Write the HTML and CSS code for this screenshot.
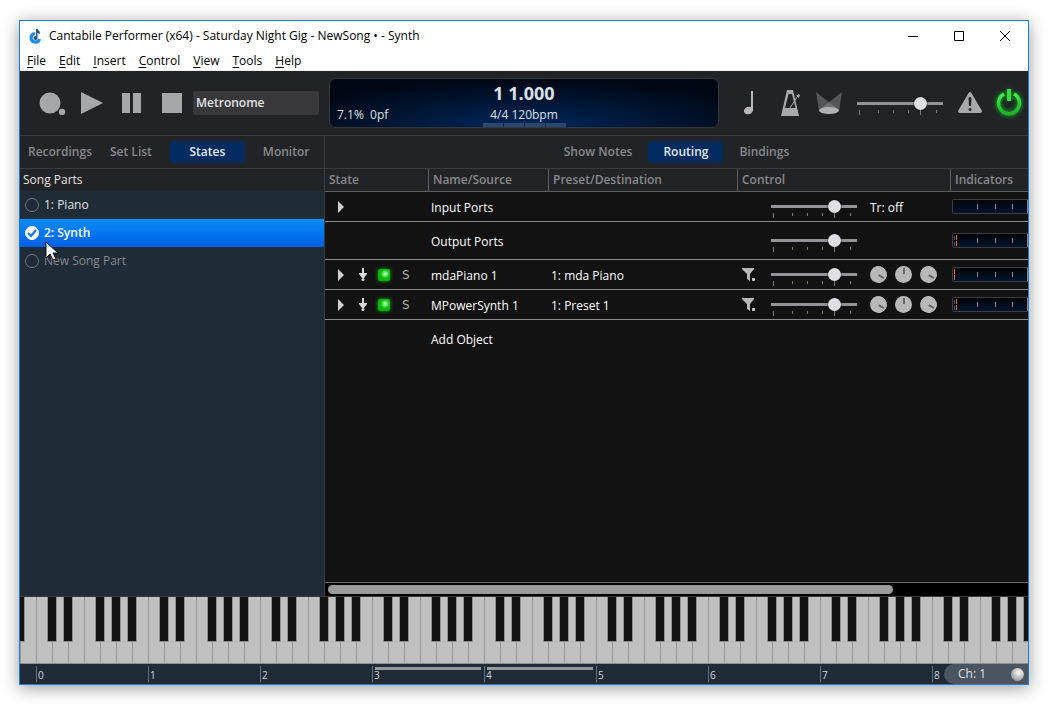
FILE: index.html
```html
<!DOCTYPE html>
<html lang="en">
<head>
    <meta charset="UTF-8">
    <meta name="viewport" content="width=device-width, initial-scale=1.0">
    <title>Cantabile Performer</title>
    <link rel="stylesheet" href="styles.css">
</head>
<body>
    <!-- shared icons -->
    <svg class="defs" aria-hidden="true">
        <defs>
            <linearGradient id="keyGrad" x1="0" y1="0" x2="0" y2="1">
                <stop offset="0" stop-color="#3cf04c"/><stop offset="1" stop-color="#1fae2b"/>
            </linearGradient>
            <radialGradient id="ledGrad" cx="0.6" cy="0.4" r="0.6">
                <stop offset="0" stop-color="#c8ffc8"/><stop offset="0.35" stop-color="#5ce05c"/><stop offset="0.6" stop-color="#0cc00c"/><stop offset="1" stop-color="#06b406"/>
            </radialGradient>
            <linearGradient id="meterGrad" x1="0" y1="0" x2="0" y2="1">
                <stop offset="0" stop-color="#000306"/><stop offset="1" stop-color="#02142f"/>
            </linearGradient>
            <filter id="glow" x="-40%" y="-40%" width="180%" height="180%">
                <feGaussianBlur stdDeviation="2"/>
            </filter>
            <pattern id="octave" x="16" y="0" width="112" height="67" patternUnits="userSpaceOnUse">
                <rect width="112" height="67" fill="#c0c0c0"/>
                <path d="M0 0h1v67h-1zM16 0h1v67h-1zM32 0h1v67h-1zM48 0h1v67h-1zM64 0h1v67h-1zM80 0h1v67h-1zM96 0h1v67h-1z" fill="#979999"/>
                <path d="M11 0h10v45h-10zM27 0h10v45h-10zM59 0h10v45h-10zM75 0h10v45h-10zM91 0h10v45h-10z" fill="#919191"/>
                <path d="M12 0h8v44h-8zM28 0h8v44h-8zM60 0h8v44h-8zM76 0h8v44h-8zM92 0h8v44h-8z" fill="#121212"/>
                <rect y="66" width="112" height="1" fill="#8c8f90"/>
            </pattern>
        </defs>
        <symbol id="expand" viewBox="0 0 7 12"><path d="M1 0L7 6L1 12z" fill="#d0d0d0"/></symbol>
        <symbol id="route" viewBox="0 0 8 14"><path d="M3 0h2v5h3v1L5 10H3L0 6V5h3z" fill="#d8d8d8"/><circle cx="4" cy="11.500" r="1.500" fill="#d8d8d8"/></symbol>
        <symbol id="led" viewBox="0 0 18 18">
            <rect x="3" y="3" width="12" height="12" rx="2" fill="#0a9a0a" filter="url(#glow)"/>
            <rect x="3" y="3" width="12" height="12" rx="2" fill="url(#ledGrad)"/>
        </symbol>
        <symbol id="funnel" viewBox="0 0 14 14"><path d="M0 0h12v1L8 6v7L5 11V6L0 1z" fill="#b8b8b8"/><rect x="10" y="10" width="3" height="3" rx="1" fill="#d0d0d0"/></symbol>
        <symbol id="ticks" viewBox="0 0 86 6"><path d="M2 0h1v5h-1zM21 0h1v3h-1zM36 0h1v3h-1zM51 0h1v3h-1zM63 0h1v5h-1zM79 0h1v3h-1z" fill="#78787c"/></symbol>
        <symbol id="meter" viewBox="0 0 100 16">
            <rect x="0.500" y="0.500" width="99" height="14" rx="1" fill="url(#meterGrad)" stroke="#3c3e44"/>
            <path d="M25 5h1v5h-1zM43 5h1v5h-1zM60 5h1v5h-1zM75 1h1v13h-1z" fill="#8b8f96"/>
        </symbol>
    </svg>

    <div class="window">
        <header class="titlebar">
            <svg class="app-icon" viewBox="0 0 14 16" aria-hidden="true">
                <path d="M6 5.500A4.300 4.300 0 1 0 10.500 11" fill="none" stroke="#1a8bef" stroke-width="3.200"/>
                <path d="M7 1h1.500l2.500 3l-.5 2L8.500 5v5a2 2 0 1 1-1.500-2z" fill="#2a5680"/>
            </svg>
            <h1>Cantabile Performer (x64) - Saturday Night Gig - NewSong • - Synth</h1>
            <div class="caption">
                <button aria-label="Minimize"><svg viewBox="0 0 10 10"><path d="M0 5.500h10"/></svg></button>
                <button aria-label="Maximize"><svg viewBox="0 0 10 10"><path d="M0.500 0.500h9v9h-9z"/></svg></button>
                <button aria-label="Close"><svg viewBox="0 0 10 10"><path d="M0 0l10 10M10 0L0 10"/></svg></button>
            </div>
        </header>
        <nav class="menubar">
            <button><u>F</u>ile</button>
            <button><u>E</u>dit</button>
            <button><u>I</u>nsert</button>
            <button><u>C</u>ontrol</button>
            <button><u>V</u>iew</button>
            <button><u>T</u>ools</button>
            <button><u>H</u>elp</button>
        </nav>

        <div class="toolbar">
            <div class="transport">
                <button aria-label="Record"><svg viewBox="0 0 28 24"><circle cx="12" cy="12" r="10.500"/><circle cx="24" cy="21" r="3.200"/></svg></button>
                <button aria-label="Play"><svg viewBox="0 0 22 24"><path d="M0 1l22 11L0 23z"/></svg></button>
                <button aria-label="Pause"><svg viewBox="0 0 20 24"><path d="M0 2h8v20H0zM11 2h8v20h-8z"/></svg></button>
                <button aria-label="Stop"><svg viewBox="0 0 20 24"><path d="M0 2h20v20H0z"/></svg></button>
            </div>
            <button class="metronome">Metronome</button>
            <div class="display">
                <span class="load">7.1%&nbsp; 0pf</span>
                <div class="clock">
                    <strong>1 1.000</strong>
                    <span>4/4 120bpm</span>
                    <div class="beats"><i></i><i></i><i></i><i></i></div>
                </div>
            </div>
            <div class="tools">
                <button class="tempo" aria-label="Tempo"><svg width="10" height="24" viewBox="0 0 10 24"><path d="M7 0h2v19h-2z" fill="#b8b8ba"/><ellipse cx="4.500" cy="19.500" rx="4.700" ry="3.600" transform="rotate(-20 4.500 19.500)" fill="#b8b8ba"/></svg></button>
                <button aria-label="Metronome click"><svg width="20" height="28" viewBox="0 0 20 28"><path fill-rule="evenodd" d="M6 1h6l6 26H0zM7.500 5L4 19h10.500L11 5z" fill="#a8a9ac"/><path d="M9 19L18 5" stroke="#a8a9ac"/><path d="M15 6l3 3l1-3z" fill="#a8a9ac"/></svg></button>
                <button aria-label="Lights"><svg width="26" height="24" viewBox="0 0 26 24"><path d="M0 1L23 19L3 20z" fill="#8a8b8e" opacity="0.500"/><path d="M26 1L3 19L23 20z" fill="#8a8b8e" opacity="0.500"/><ellipse cx="13" cy="19.500" rx="10" ry="3.500" fill="#b0b1b4"/></svg></button>
                <label class="slider"><input type="range" aria-label="Master gain" value="78"><svg><use href="#ticks"/></svg></label>
                <button aria-label="Panic"><svg width="24" height="24" viewBox="0 0 24 24"><path fill-rule="evenodd" d="M12 1q1 0 2 2l10 17q0 2-2 2H2q-2 0-2-2L10 3q1-2 2-2zM10.500 7l.5 8h2l.5-8q-1.500-2-3 0zM12 17a1.500 1.500 0 1 0 .1 0z" fill="#a8a9ac"/></svg></button>
                <button aria-label="Power"><svg class="power" width="24" height="32" viewBox="3 0 24 32"><g fill="none" stroke="#159a20" filter="url(#glow)" stroke-width="5"><path d="M10 7a10.500 10.500 0 1 0 10 0M15 3v10"/></g><path d="M10 7a10.500 10.500 0 1 0 10 0" fill="none" stroke="url(#keyGrad)" stroke-width="3.500"/><path d="M15 2v12" fill="none" stroke="#35dd43" stroke-width="4"/></svg></button>
            </div>
        </div>

        <main class="panes">
            <section class="side">
                <div class="tabs">
                    <button>Recordings</button>
                    <button>Set List</button>
                    <button class="active">States</button>
                    <button>Monitor</button>
                </div>
                <h2>Song Parts</h2>
                <ul class="parts">
                    <li><label><input type="radio" name="part">1: Piano</label></li>
                    <li class="selected"><label><input type="radio" name="part" checked><svg class="tick" viewBox="0 0 14 14" aria-hidden="true"><path d="M3 7l3 3l5-6"/></svg>2: Synth</label></li>
                    <li class="new"><label><input type="radio" name="part">New Song Part</label></li>
                </ul>
                <svg class="cursor" width="14" height="20" viewBox="0 0 14 20" aria-hidden="true"><path d="M1 1v16l4-4l3 6l3-1l-3-6h5z" fill="#fff" stroke="#111"/></svg>
            </section>

            <section class="main">
                <div class="tabs">
                    <button>Show Notes</button>
                    <button class="active">Routing</button>
                    <button>Bindings</button>
                </div>
                <div class="grid">
                    <table>
                        <colgroup><col class="c-state"><col class="c-name"><col class="c-preset"><col class="c-control"><col></colgroup>
                        <thead>
                            <tr><th>State</th><th>Name/Source</th><th>Preset/Destination</th><th>Control</th><th>Indicators</th></tr>
                        </thead>
                        <tbody>
                            <tr>
                                <td><div class="state"><svg class="expand"><use href="#expand"/></svg></div></td>
                                <td class="text">Input Ports</td>
                                <td></td>
                                <td><div class="control"><span class="filter"></span><label class="slider"><input type="range" aria-label="Input gain" value="78"><svg><use href="#ticks"/></svg></label><span class="text">Tr: off</span></div></td>
                                <td><svg class="meter"><use href="#meter"/></svg></td>
                            </tr>
                            <tr class="tall">
                                <td></td>
                                <td class="text">Output Ports</td>
                                <td></td>
                                <td><div class="control"><span class="filter"></span><label class="slider"><input type="range" aria-label="Output gain" value="78"><svg><use href="#ticks"/></svg></label></div></td>
                                <td><svg class="meter"><use href="#meter"/><path class="idle" d="M2 3h1v4h-1zM2 9h1v4h-1z"/><path class="peak" d="M4 2h1v5h-1zM4 8h1v5h-1z"/></svg></td>
                            </tr>
                            <tr>
                                <td><div class="state"><svg class="expand"><use href="#expand"/></svg><svg class="route"><use href="#route"/></svg><svg class="led"><use href="#led"/></svg><button>S</button></div></td>
                                <td class="text">mdaPiano 1</td>
                                <td class="text">1: mda Piano</td>
                                <td><div class="control"><svg class="filter"><use href="#funnel"/></svg><label class="slider"><input type="range" aria-label="mdaPiano gain" value="78"><svg><use href="#ticks"/></svg></label><div class="knobs"><button class="knob low" aria-label="Dry"></button><button class="knob" aria-label="Pan"></button><button class="knob low" aria-label="Wet"></button></div></div></td>
                                <td><svg class="meter"><use href="#meter"/><path class="peak" d="M2 2h1v5h-1zM2 8h1v5h-1z"/></svg></td>
                            </tr>
                            <tr>
                                <td><div class="state"><svg class="expand"><use href="#expand"/></svg><svg class="route"><use href="#route"/></svg><svg class="led"><use href="#led"/></svg><button>S</button></div></td>
                                <td class="text">MPowerSynth 1</td>
                                <td class="text">1: Preset 1</td>
                                <td><div class="control"><svg class="filter"><use href="#funnel"/></svg><label class="slider"><input type="range" aria-label="MPowerSynth gain" value="78"><svg><use href="#ticks"/></svg></label><div class="knobs"><button class="knob low" aria-label="Dry"></button><button class="knob" aria-label="Pan"></button><button class="knob low" aria-label="Wet"></button></div></div></td>
                                <td><svg class="meter"><use href="#meter"/><path class="idle" d="M2 3h1v4h-1zM2 9h1v4h-1z"/><path class="peak" d="M4 2h1v5h-1zM4 8h1v5h-1z"/></svg></td>
                            </tr>
                            <tr class="add">
                                <td></td>
                                <td>Add Object</td>
                                <td></td>
                                <td></td>
                                <td></td>
                            </tr>
                        </tbody>
                    </table>
                </div>
                <div class="scrollbar"><div class="thumb"></div></div>
            </section>
        </main>

        <footer class="keyboard">
            <svg class="keys" aria-hidden="true"><rect width="100%" height="67" fill="url(#octave)"/></svg>
            <div class="octaves">
                <span>0</span><span>1</span><span>2</span><span class="range">3</span><span class="range">4</span><span>5</span><span>6</span><span>7</span><span>8</span>
            </div>
            <button class="channel">Ch: 1<i></i></button>
        </footer>
    </div>
</body>
</html>
```

FILE: styles.css
```css
* {
    box-sizing: border-box;
}

body {
    margin: 0;
    padding: 20px 23px 23px 19px;
    height: 100vh;
    background: #fff;
    font-family: "Open Sans", "Noto Sans", sans-serif;
    font-size: 12px;
    line-height: 16px;
    color: #fff;
    overflow: hidden;
}

button {
    padding: 0;
    border: 0;
    background: none;
    font: inherit;
    color: inherit;
}

h1, h2, ul {
    margin: 0;
    padding: 0;
    font-size: 12px;
    font-weight: normal;
    list-style: none;
}

svg {
    display: block;
    flex: none;
}

.defs {
    position: absolute;
    width: 0;
    height: 0;
}

.window {
    display: flex;
    flex-direction: column;
    height: 100%;
    border: 1px solid #1a7fd6;
    background: #222326;
    box-shadow: 0 3px 16px rgba(0, 0, 0, 0.4);
}

/* title and menu */
.titlebar {
    display: flex;
    align-items: center;
    height: 30px;
    padding-left: 9px;
    background: #fff;
    color: #000;
}

.app-icon {
    width: 14px;
    height: 16px;
    margin-right: 6px;
}

.caption {
    display: flex;
    margin-left: auto;
}

.caption button {
    display: flex;
    justify-content: center;
    width: 46px;
}

.caption svg {
    width: 10px;
    height: 10px;
    overflow: visible;
    fill: none;
    stroke: #000;
}

.menubar {
    display: flex;
    gap: 13px;
    height: 20px;
    padding-left: 7px;
    background: #fff;
    border-bottom: 1px solid #f0f0f0;
    color: #000;
}

.menubar u {
    text-underline-offset: 2px;
}

/* toolbar */
.toolbar {
    display: flex;
    align-items: center;
    height: 65px;
    padding: 0 7px 0 18px;
    border-bottom: 1px solid #3a3b3f;
}

.transport {
    display: flex;
    gap: 15px;
    width: 155px;
}

.transport button:nth-child(n+3) {
    margin-left: 4px;
}

.transport button:last-child {
    margin-left: 5px;
}

.transport svg {
    height: 24px;
    fill: #a6a7ab;
}

.metronome {
    width: 126px;
    height: 24px;
    padding-left: 3px;
    border-radius: 3px;
    background: #38383a;
    color: #e2e2e4;
    font-weight: 600;
    text-align: left;
}

.display {
    display: grid;
    grid-template-columns: 1fr auto 1fr;
    align-items: end;
    flex: 1;
    height: 50px;
    margin-left: 10px;
    padding: 0 7px;
    border: 1px solid #35373b;
    border-radius: 7px;
    background: radial-gradient(ellipse 65% 100% at 50% 100%, #002861, #001736 50%, #000714 100%);
    color: #dde0e5;
}

.load {
    padding-bottom: 4px;
}

.clock {
    display: flex;
    flex-direction: column;
    align-items: center;
}

.clock strong {
    margin-bottom: 2px;
    font-size: 18px;
    line-height: 24px;
}

.beats {
    display: flex;
    gap: 1px;
}

.beats i {
    width: 20px;
    height: 4px;
    background: #294870;
}

.tools {
    display: flex;
    align-items: center;
    margin-left: 25px;
    gap: 15px;
}

.tempo {
    margin-right: 12px;
}

.power {
    overflow: visible;
}

/* sliders */
.slider {
    display: flex;
    flex-direction: column;
    width: 86px;
    height: 13px;
}

.slider input {
    appearance: none;
    flex: none;
    width: 86px;
    height: 13px;
    margin: 0;
    background: linear-gradient(#929397, #929397) center / 100% 3px no-repeat;
}

.slider input::-webkit-slider-thumb {
    appearance: none;
    width: 13px;
    height: 13px;
    border-radius: 50%;
    background: #dfe0e4;
    box-shadow: 0 0 2px #000;
}

.slider svg {
    width: 86px;
    height: 6px;
}

/* panes */
.panes {
    display: flex;
    flex: 1;
    min-height: 0;
}

.side {
    position: relative;
    width: 305px;
    border-right: 1px solid #3a3b3f;
    background: #202b38;
}

.tabs {
    display: flex;
    align-items: center;
    gap: 16px;
    height: 33px;
    padding-left: 8px;
    background: #222326;
    border-bottom: 1px solid #3a3b3f;
    color: #88898c;
    font-weight: 600;
}

.tabs button {
    height: 22px;
}

.tabs .active {
    width: 75px;
    border-radius: 4px;
    background: #012b61;
    color: #e8eaee;
}

.side .tabs {
    gap: 18px;
}

.main .tabs {
    justify-content: center;
    padding: 0;
}

.side h2 {
    height: 22px;
    padding: 3px;
    background: #222326;
    color: #e2e2e4;
}

.parts label {
    display: flex;
    align-items: center;
    height: 28px;
    gap: 5px;
    padding-left: 5px;
    color: #e2e2e4;
}

.parts .selected label {
    background: linear-gradient(#0a8dfa, #005fe6);
    color: #fff;
    font-weight: 600;
}

.parts .new label {
    color: #85898f;
}

.parts input {
    appearance: none;
    width: 14px;
    height: 14px;
    margin: 0;
    border: 1px solid #6a727b;
    border-radius: 50%;
}

.parts input:checked {
    border-color: #fff;
    background: #fff;
}

.tick {
    width: 14px;
    height: 14px;
    margin: 0 0 0 -19px;
    fill: none;
    stroke: #0a72ee;
    stroke-width: 2;
}

.cursor {
    position: absolute;
    left: 25px;
    top: 105px;
}

/* routing table */
.main {
    display: flex;
    flex-direction: column;
    flex: 1;
    min-width: 0;
}

.grid {
    flex: 1;
    overflow: hidden;
    background: #121212;
}

table {
    width: 100%;
    table-layout: fixed;
    border-collapse: separate;
    border-spacing: 0;
}

.c-state { width: 104px; }
.c-name { width: 120px; }
.c-preset { width: 189px; }
.c-control { width: 213px; }

th {
    height: 23px;
    padding: 0 4px;
    border-right: 1px solid #5c5d60;
    border-bottom: 1px solid #5c5d60;
    background: #222326;
    color: #88898c;
    font-weight: 600;
    text-align: left;
}

th:last-child {
    border-right: 0;
}

td {
    height: 30px;
    padding: 0 2px;
    border-bottom: 1px solid #88888a;
    overflow: hidden;
}

td:last-child {
    padding: 0 0 0 1px;
}

.text {
    padding-top: 2px;
}

.tall td {
    height: 38px;
}

.add td {
    height: 40px;
    border: 0;
}

.state {
    display: flex;
    align-items: center;
    padding-left: 10px;
    color: #b0b0b0;
}

.expand {
    width: 7px;
    height: 12px;
    margin-right: 15px;
}

.route {
    width: 8px;
    height: 14px;
    margin-right: 8px;
}

.led {
    width: 18px;
    height: 18px;
    margin-right: 9px;
}

.state button {
    font-family: "DejaVu Sans", sans-serif;
}

.control {
    display: flex;
    align-items: center;
    height: 28px;
    padding-left: 2px;
}

.filter {
    width: 14px;
    height: 14px;
    margin-right: 15px;
}

.control .slider {
    margin-right: 13px;
}

.knobs {
    display: flex;
    gap: 8px;
}

.knob {
    width: 17px;
    height: 17px;
    border-radius: 50%;
    background: linear-gradient(#666, #666) 8px 2px / 2px 6px no-repeat, #b8b8b8;
}

.knob.low {
    transform: rotate(120deg);
}

.meter {
    width: 100px;
    height: 16px;
}

.idle {
    fill: #54565a;
}

.peak {
    fill: #ff6a00;
}

.scrollbar {
    height: 14px;
    padding: 2px 3px;
    border-top: 1px solid #6a6a6a;
    background: #000;
}

.thumb {
    width: 81%;
    height: 9px;
    border-radius: 5px;
    background: #9b9b9b;
}

/* keyboard */
.keyboard {
    position: relative;
    border-top: 1px solid #3a3b3f;
    background: #202b38;
}

.keys {
    width: 100%;
    height: 67px;
}

.octaves {
    display: flex;
    height: 20px;
    padding: 2px 0 2px 16px;
    overflow: hidden;
    font-size: 10px;
    color: #d0d3d8;
}

.octaves span {
    flex: none;
    width: 112px;
    padding: 1px 0 0 1px;
    border-left: 1px solid #6a6d72;
}

.octaves .range {
    background: linear-gradient(#97999d, #97999d) 2px 1px / 106px 3px no-repeat;
}

.channel {
    position: absolute;
    right: 0;
    bottom: 0;
    display: flex;
    align-items: center;
    justify-content: space-between;
    width: 84px;
    height: 20px;
    padding: 0 4px 0 14px;
    border-radius: 10px 0 0 10px;
    background: #4b5461;
    color: #dde0e5;
}

.channel i {
    width: 13px;
    height: 13px;
    border-radius: 50%;
    background: radial-gradient(circle at 60% 35%, #fff, #b8b8b8 50%, #888);
}
```
